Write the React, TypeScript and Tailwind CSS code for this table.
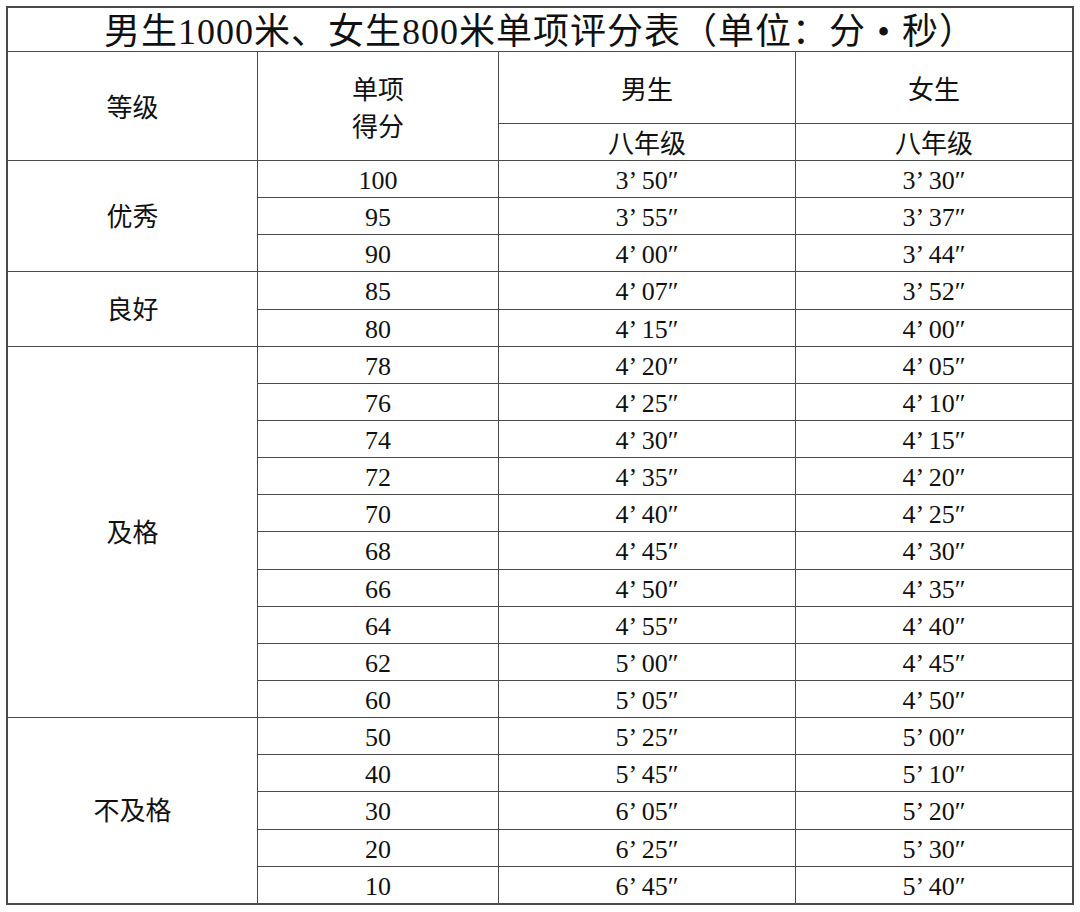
const groups = [
  {
    name: "优秀",
    span: "row-span-3",
    rows: [
      ["100", "3’ 50″", "3’ 30″"],
      ["95", "3’ 55″", "3’ 37″"],
      ["90", "4’ 00″", "3’ 44″"],
    ],
  },
  {
    name: "良好",
    span: "row-span-2",
    rows: [
      ["85", "4’ 07″", "3’ 52″"],
      ["80", "4’ 15″", "4’ 00″"],
    ],
  },
  {
    name: "及格",
    span: "row-span-10",
    rows: [
      ["78", "4’ 20″", "4’ 05″"],
      ["76", "4’ 25″", "4’ 10″"],
      ["74", "4’ 30″", "4’ 15″"],
      ["72", "4’ 35″", "4’ 20″"],
      ["70", "4’ 40″", "4’ 25″"],
      ["68", "4’ 45″", "4’ 30″"],
      ["66", "4’ 50″", "4’ 35″"],
      ["64", "4’ 55″", "4’ 40″"],
      ["62", "5’ 00″", "4’ 45″"],
      ["60", "5’ 05″", "4’ 50″"],
    ],
  },
  {
    name: "不及格",
    span: "row-span-5",
    rows: [
      ["50", "5’ 25″", "5’ 00″"],
      ["40", "5’ 45″", "5’ 10″"],
      ["30", "6’ 05″", "5’ 20″"],
      ["20", "6’ 25″", "5’ 30″"],
      ["10", "6’ 45″", "5’ 40″"],
    ],
  },
]

const cell = "bg-white flex items-center justify-center"

export default function App() {
  return (
    <div className="w-[1080px] h-[912px] bg-white pt-[6px] pl-[6px] font-['Liberation_Serif','Noto_Sans_CJK_SC',serif] text-[#111]">
      <div className="w-[1068px] border-2 border-[#4a4a4a] bg-[#4a4a4a] grid gap-px grid-cols-[249px_240px_296px_276px] grid-rows-[43px_71px_36px_repeat(20,36.15px)] text-[26px] leading-none">
        {/* title */}
        <div className={`${cell} col-span-4 text-[36px] tracking-[1px] pt-[5px]`}>
          男生1000米、女生800米单项评分表（单位：分
          <span className="inline-block w-[36px] text-center">•</span>
          秒）
        </div>

        {/* header */}
        <div className={`${cell} row-span-2 pt-[6px]`}>等级</div>
        <div className={`${cell} row-span-2 flex-col gap-[11px] pt-[6px]`}>
          <span>单项</span>
          <span>得分</span>
        </div>
        <div className={`${cell} pt-[6px]`}>男生</div>
        <div className={`${cell} pt-[6px]`}>女生</div>
        <div className={`${cell} pt-[6px]`}>八年级</div>
        <div className={`${cell} pt-[6px]`}>八年级</div>

        {/* data */}
        {groups.map((g) =>
          g.rows.map((r, i) => (
            <>
              {i === 0 && (
                <div key={g.name} className={`${cell} ${g.span} pt-[4px]`}>
                  {g.name}
                </div>
              )}
              <div className={`${cell} pt-[4px]`}>{r[0]}</div>
              <div className={`${cell} pt-[4px]`}>{r[1]}</div>
              <div className={`${cell} pt-[4px]`}>{r[2]}</div>
            </>
          ))
        )}
      </div>
    </div>
  )
}
